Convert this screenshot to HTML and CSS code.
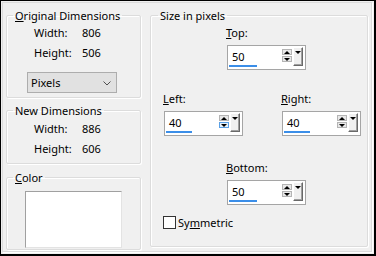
FILE: index.html
```html
<!DOCTYPE html>
<html lang="en">
<head>
    <meta charset="UTF-8">
    <title>Canvas Size</title>
    <link rel="stylesheet" href="styles.css">
</head>
<body>
    <div class="dialog">
        <div class="panel">
            <div class="left-col">
                <fieldset class="group group-original">
                    <legend><u>O</u>riginal Dimensions</legend>
                    <div class="dim-row first"><span class="dim-label">Width:</span><span>806</span></div>
                    <div class="dim-row"><span class="dim-label">Height:</span><span>506</span></div>
                    <div class="select">
                        <span>Pixels</span>
                        <svg width="8" height="5" viewBox="0 0 8 5"><path d="M0.5 0.5 L4 4 L7.5 0.5" fill="none" stroke="#505050" stroke-width="1"/></svg>
                    </div>
                </fieldset>
                <fieldset class="group group-new">
                    <legend>New Dimensions</legend>
                    <div class="dim-row first"><span class="dim-label">Width:</span><span>886</span></div>
                    <div class="dim-row"><span class="dim-label">Height:</span><span>606</span></div>
                </fieldset>
                <fieldset class="group group-color">
                    <legend><u>C</u>olor</legend>
                    <div class="swatch"></div>
                </fieldset>
            </div>

            <fieldset class="group group-size">
                <legend>Size in pixels</legend>

                <div class="field field-top">
                    <label><u>T</u>op:</label>
                    <div class="spin-box">
                        <div class="spin-value"><span>50</span><div class="bar" style="width: 28px"></div></div>
                        <div class="spin-arrows"><div class="spin-btn up"></div><div class="spin-btn down"></div></div>
                        <div class="spin-drop"></div>
                    </div>
                </div>

                <div class="side-row">
                    <div class="field field-left">
                        <label><u>L</u>eft:</label>
                        <div class="spin-box">
                            <div class="spin-value"><span>40</span><div class="bar" style="width: 26px"></div></div>
                            <div class="spin-arrows"><div class="spin-btn up"></div><div class="spin-btn down hot"></div></div>
                            <div class="spin-drop"></div>
                        </div>
                    </div>
                    <div class="field field-right">
                        <label><u>R</u>ight:</label>
                        <div class="spin-box">
                            <div class="spin-value"><span>40</span><div class="bar" style="width: 26px"></div></div>
                            <div class="spin-arrows"><div class="spin-btn up"></div><div class="spin-btn down"></div></div>
                            <div class="spin-drop"></div>
                        </div>
                    </div>
                </div>

                <div class="field field-bottom">
                    <label><u>B</u>ottom:</label>
                    <div class="spin-box">
                        <div class="spin-value"><span>50</span><div class="bar" style="width: 28px"></div></div>
                        <div class="spin-arrows"><div class="spin-btn up"></div><div class="spin-btn down"></div></div>
                        <div class="spin-drop"></div>
                    </div>
                </div>

                <div class="check-row">
                    <span class="checkbox"></span>
                    <span>Sy<u>m</u>metric</span>
                </div>
            </fieldset>
        </div>
    </div>
</body>
</html>
```
FILE: styles.css
```css
body {
    margin: 0;
    font-family: 'Noto Sans', sans-serif;
    font-size: 11px;
    color: #000;
}
.dialog {
    width: 376px;
    height: 256px;
    box-sizing: border-box;
    border-style: solid;
    border-color: #000;
    border-width: 1px 2px 2px 1px;
    background: #f0f0f0;
    overflow: hidden;
    padding: 1px;
}
.panel {
    width: 370px;
    height: 250px;
    box-sizing: border-box;
    border: 1px solid #dcdcdc;
    box-shadow: 1px 1px 0 #fff;
    display: flex;
    gap: 9px;
    padding: 5px 0 0 3px;
}
.left-col {
    width: 135px;
    display: flex;
    flex-direction: column;
}
.group {
    margin: 0;
    padding: 0;
    border: 1px solid #dcdcdc;
    border-radius: 2px;
    box-shadow: inset 1px 1px 0 #fff, 1px 1px 0 #fff;
    min-width: 0;
}
.group legend {
    padding: 0 2px;
    margin-left: 6px;
    line-height: 15px;
}
.dim-row {
    display: flex;
    line-height: 20px;
    padding-left: 27px;
}
.dim-label {
    width: 48px;
}
.group-original .select {
    margin: 9px 0 4px 20px;
}
.group-new {
    margin-top: 5px;
    padding-bottom: 4px;
}
.group-new .dim-row.first {
    padding-top: 1px;
}
.group-color {
    margin-top: 6px;
    padding-bottom: 1px;
}
.select {
    width: 90px;
    height: 21px;
    box-sizing: border-box;
    border: 1px solid #adadad;
    background: #e1e1e1;
    display: flex;
    align-items: center;
    justify-content: space-between;
    padding: 0 5px 0 3px;
}
.select svg {
    display: block;
    margin-top: 1px;
}
.swatch {
    width: 97px;
    height: 57px;
    box-sizing: border-box;
    margin: 6px 0 0 18px;
    background: #fff;
    border: 1px solid #a0a0a0;
    border-right-color: #e3e3e3;
    border-bottom-color: #e3e3e3;
}

/* size in pixels */
.group-size {
    width: 218px;
    height: 239px;
    box-sizing: border-box;
}
.group-size legend {
    margin-left: 7px;
}
.field {
    display: flex;
    flex-direction: column;
    gap: 5px;
    width: 79px;
}
.field label {
    line-height: 15px;
    margin-left: -1px;
}
.field-top {
    margin: 2px 0 0 76px;
}
.side-row {
    display: flex;
    gap: 39px;
    margin: 21px 0 0 13px;
}
.field-bottom {
    margin: 24px 0 0 76px;
}
.spin-box {
    width: 79px;
    height: 25px;
    box-sizing: border-box;
    border: 1px solid #a5a5a5;
    background: #fff;
    display: flex;
    align-items: flex-start;
    padding-right: 2px;
}
.spin-value {
    width: 54px;
    display: flex;
    flex-direction: column;
}
.spin-value span {
    padding: 2px 0 0 4px;
    line-height: 17px;
}
.bar {
    height: 2px;
    margin-left: 1px;
    background: #3b8ee8;
}
.spin-arrows {
    width: 10px;
    margin-top: 3px;
    display: flex;
    flex-direction: column;
    gap: 1px;
}
.spin-btn {
    height: 6px;
    box-sizing: border-box;
    border: 1px solid #b4b4b4;
    background: #e8e8e8;
    display: flex;
    align-items: center;
    justify-content: center;
}
.spin-btn.hot {
    border-color: #5aa0e6;
    background: #e5f1fb;
}
.spin-btn.up::after {
    content: "";
    border-left: 3px solid transparent;
    border-right: 3px solid transparent;
    border-bottom: 3px solid #000;
}
.spin-btn.down::after {
    content: "";
    border-left: 3px solid transparent;
    border-right: 3px solid transparent;
    border-top: 3px solid #000;
}
.spin-drop {
    width: 10px;
    height: 19px;
    box-sizing: border-box;
    margin: 1px 0 0 1px;
    background: #f0f0f0;
    border: 1px solid;
    border-color: #fff #696969 #696969 #fff;
    box-shadow: inset -1px -1px 0 #a0a0a0;
    display: flex;
    justify-content: center;
    padding-top: 3px;
}
.spin-drop::after {
    content: "";
    width: 0;
    height: 0;
    border-left: 3px solid transparent;
    border-right: 3px solid transparent;
    border-top: 3px solid #000;
}
.check-row {
    display: flex;
    align-items: center;
    gap: 2px;
    margin: 10px 0 0 12px;
    line-height: 15px;
}
.checkbox {
    width: 13px;
    height: 13px;
    box-sizing: border-box;
    border: 1px solid #333;
    background: #fff;
}
```
